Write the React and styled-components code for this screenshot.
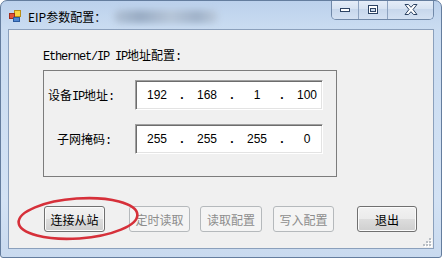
import { Fragment } from "react";
import styled, { createGlobalStyle } from "styled-components";

const GlobalStyle = createGlobalStyle`
  html, body { margin: 0; padding: 0; background: #ffffff; }
  body { font-family: "Noto Sans CJK SC", "Liberation Sans", sans-serif; }
`;

const CJK = `"Noto Sans CJK SC", "Liberation Sans", sans-serif`;

const Window = styled.div`
  width: 442px;
  height: 258px;
  box-sizing: border-box;
  display: flex;
  flex-direction: column;
  padding: 0 7px 8px 7px;
  border: 1px solid #647d9e;
  border-radius: 7px 7px 3px 3px;
  background: linear-gradient(to bottom, #bcd1ec 0px, #cadcf1 28px, #d3e2f4 200px, #c9daef 100%);
  overflow: hidden;
`;

const TitleBar = styled.div`
  height: 28px;
  display: flex;
  align-items: flex-start;
`;

const AppIcon = styled.svg`
  margin: 9px 0 0 1px;
  flex: none;
`;

const Title = styled.span`
  margin: 7px 0 0 7px;
  font-family: ${CJK};
  font-size: 12px;
  line-height: 17px;
  color: #000;
`;

const Smudge = styled.div`
  margin: 9px 0 0 8px;
  width: 104px;
  height: 13px;
  border-radius: 6px;
  background: linear-gradient(90deg, #b2c2d6, #98abc3 25%, #b6c5d8 55%, #9fb1c8 80%, #bccbdd);
  filter: blur(3px);
`;

const Spacer = styled.div`
  flex: 1;
`;

const CaptionGroup = styled.div`
  display: flex;
  height: 19px;
  margin-top: -1px;
  border: 1px solid #7189a9;
  border-top: none;
  border-radius: 0 0 5px 5px;
  overflow: hidden;
`;

const CapButton = styled.div`
  width: ${(p) => p.w}px;
  height: 100%;
  display: flex;
  align-items: center;
  justify-content: center;
  background: linear-gradient(to bottom, #e6eef9 0%, #d7e3f2 45%, #c7d7ec 50%, #d4e1f2 100%);
  & + & {
    border-left: 1px solid #8ea3c0;
  }
`;

const Client = styled.div`
  position: relative;
  flex: 1;
  box-sizing: border-box;
  border: 1px solid #8ba0bc;
  background: #f0f0f0;
  padding: 19px 0 0 34px;
`;

const GroupLabel = styled.div`
  font-family: ${CJK};
  font-size: 12px;
  line-height: 12px;
  height: 12px;
  color: #000;
  white-space: nowrap;
`;

const Mono = styled.span`
  font-family: "Liberation Mono", monospace;
  font-size: 12px;
  letter-spacing: -1.2px;
`;

const Panel = styled.div`
  margin-top: 9px;
  width: 294px;
  height: 107px;
  box-sizing: border-box;
  border: 1px solid #7c7c7c;
  padding-top: 9px;
  display: flex;
  flex-direction: column;
  gap: 14px;
`;

const Row = styled.div`
  display: flex;
  align-items: center;
  height: 30px;
`;

const FieldLabel = styled.div`
  width: 91px;
  box-sizing: border-box;
  padding-left: ${(p) => p.indent}px;
  font-family: ${CJK};
  font-size: 12px;
  color: #000;
  white-space: nowrap;
`;

const IpBox = styled.div`
  width: 188px;
  height: 30px;
  box-sizing: border-box;
  background: #fff;
  border: 1px solid;
  border-color: #a0a0a0 #ffffff #ffffff #a0a0a0;
  box-shadow: inset 1px 1px 0 #6d6d6d, inset -1px -1px 0 #e3e3e3;
  padding-left: 2px;
  display: grid;
  grid-template-columns: 38px 12px 38px 12px 38px 12px 38px;
  align-items: center;
  font-family: "Liberation Sans", Arial, sans-serif;
  font-size: 12px;
  color: #000;
`;

const Octet = styled.span`
  text-align: center;
`;

const Dot = styled.span`
  text-align: center;
  font-weight: bold;
`;

const ButtonRow = styled.div`
  margin-top: 29px;
  display: flex;
`;

const Button = styled.div`
  margin-left: ${(p) => p.ml}px;
  width: ${(p) => p.w || 61}px;
  height: 26px;
  box-sizing: border-box;
  border-radius: 3px;
  display: flex;
  align-items: center;
  justify-content: center;
  font-family: ${CJK};
  font-size: 12px;
  border: 1px solid ${(p) => (p.disabled ? "#b5b9bc" : "#707070")};
  color: ${(p) => (p.disabled ? "#8d8d8d" : "#000")};
  background: ${(p) =>
    p.disabled
      ? "#f4f4f4"
      : "linear-gradient(to bottom, #f2f2f2 0%, #ebebeb 50%, #dddddd 50%, #cfcfcf 100%)"};
  box-shadow: ${(p) => (p.disabled ? "none" : "inset 0 0 0 1px #fbfbfb")};
`;

const Overlay = styled.svg`
  position: absolute;
  left: 0;
  top: 0;
  width: 100%;
  height: 100%;
  pointer-events: none;
  overflow: visible;
`;

const Grip = styled.svg`
  position: absolute;
  right: 1px;
  bottom: 1px;
`;

function IpField({ parts }) {
  return (
    <IpBox>
      {parts.map((p, i) => (
        <Fragment key={i}>
          {i > 0 && <Dot>.</Dot>}
          <Octet>{p}</Octet>
        </Fragment>
      ))}
    </IpBox>
  );
}

const gripDots = [
  [7, 1],
  [4, 4],
  [7, 4],
  [1, 7],
  [4, 7],
  [7, 7],
];

export default function App() {
  return (
    <>
      <GlobalStyle />
      <Window>
        <TitleBar>
          <AppIcon width="12" height="12" viewBox="0 0 12 12">
            <rect x="5.5" y="0.5" width="6" height="6" fill="#f7d443" stroke="#b88d18" />
            <rect x="0.5" y="3.5" width="5" height="5" fill="#e0533a" stroke="#a02c1c" />
            <rect x="4.5" y="7.5" width="6" height="4" fill="#4f86d0" stroke="#2a5a9e" />
          </AppIcon>
          <Title>EIP参数配置：</Title>
          <Smudge />
          <Spacer />
          <CaptionGroup>
            <CapButton w={26}>
              <svg width="12" height="6" viewBox="0 0 12 6">
                <rect x="1.5" y="1.5" width="9" height="3" fill="#fff" stroke="#2d4363" />
              </svg>
            </CapButton>
            <CapButton w={28}>
              <svg width="12" height="10" viewBox="0 0 12 10">
                <rect x="1.5" y="0.5" width="9" height="8" fill="#fff" stroke="#2d4363" />
                <rect x="3.5" y="3.5" width="5" height="3" fill="#cfdcee" stroke="#2d4363" />
              </svg>
            </CapButton>
            <CapButton w={45}>
              <svg width="14" height="11" viewBox="0 0 14 11">
                <path
                  d="M1 0.5 H4.5 L7 3.3 L9.5 0.5 H13 L9 5.5 L13 10.5 H9.5 L7 7.7 L4.5 10.5 H1 L5 5.5 Z"
                  fill="#fff"
                  stroke="#2d4363"
                  strokeLinejoin="round"
                />
              </svg>
            </CapButton>
          </CaptionGroup>
        </TitleBar>

        <Client>
          <GroupLabel>
            <Mono>Ethernet/IP IP</Mono>地址配置<Mono>:</Mono>
          </GroupLabel>
          <Panel>
            <Row>
              <FieldLabel indent={4}>
                设备<Mono>IP</Mono>地址<Mono>:</Mono>
              </FieldLabel>
              <IpField parts={["192", "168", "1", "100"]} />
            </Row>
            <Row>
              <FieldLabel indent={13}>
                子网掩码<Mono>:</Mono>
              </FieldLabel>
              <IpField parts={["255", "255", "255", "0"]} />
            </Row>
          </Panel>
          <ButtonRow>
            <Button ml={1}>连接从站</Button>
            <Button ml={24} disabled>定时读取</Button>
            <Button ml={10} w={62} disabled>读取配置</Button>
            <Button ml={11} disabled>写入配置</Button>
            <Button ml={23} w={60}>退出</Button>
          </ButtonRow>

          <Overlay>
            <ellipse
              cx="69"
              cy="188.5"
              rx="59.5"
              ry="20"
              transform="rotate(-4 69 188.5)"
              fill="none"
              stroke="#d6303a"
              strokeWidth="2.6"
            />
          </Overlay>
          <Grip width="10" height="10" viewBox="0 0 10 10">
            {gripDots.map(([x, y]) => (
              <g key={x + "-" + y}>
                <rect x={x + 1} y={y + 1} width="2" height="2" fill="#ffffff" />
                <rect x={x} y={y} width="2" height="2" fill="#b9bec4" />
              </g>
            ))}
          </Grip>
        </Client>
      </Window>
    </>
  );
}
